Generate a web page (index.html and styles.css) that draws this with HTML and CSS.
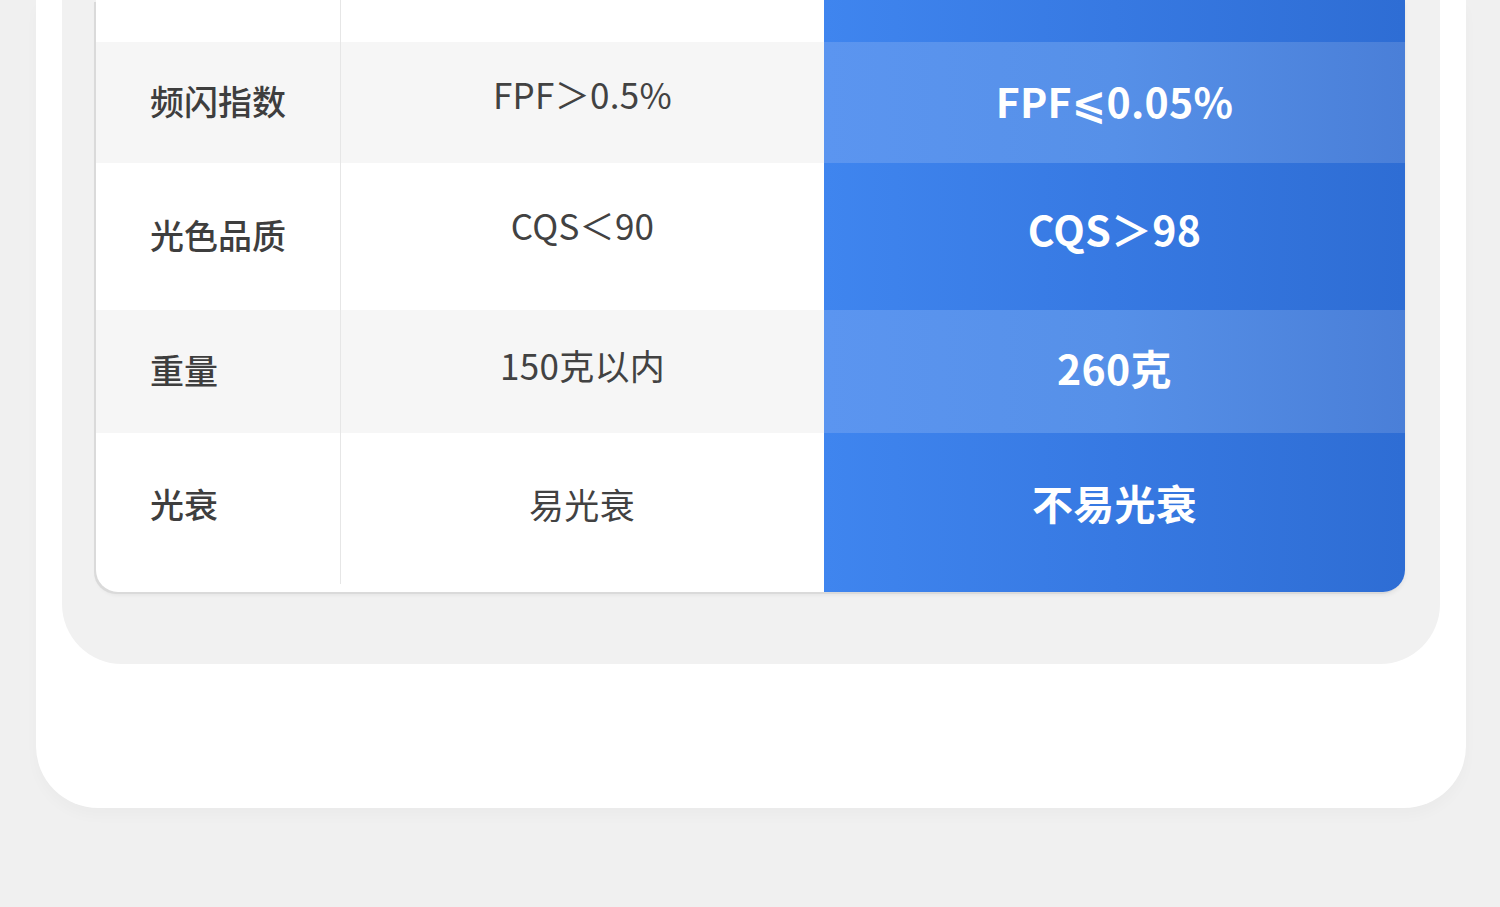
FILE: index.html
```html
<!DOCTYPE html>
<html lang="zh-CN">
<head>
<meta charset="utf-8">
<title>对比</title>
<link rel="stylesheet" href="styles.css">
</head>
<body>
<div class="page">
  <div class="outer">
    <div class="panel">
      <div class="card">
        <div class="cell c1 r0"></div>
        <div class="cell c2 r0"></div>
        <div class="cell c3 r0 dark"></div>

        <div class="cell c1 r1 gray">频闪指数</div>
        <div class="cell c2 r1 gray up7">FPF＞0.5%</div>
        <div class="cell c3 r1 light">FPF⩽0.05%</div>

        <div class="cell c1 r2">光色品质</div>
        <div class="cell c2 r2 up10">CQS＜90</div>
        <div class="cell c3 r2 dark up7">CQS＞98</div>

        <div class="cell c1 r3 gray">重量</div>
        <div class="cell c2 r3 gray up5">150克以内</div>
        <div class="cell c3 r3 light up3">260克</div>

        <div class="cell c1 r4 up7">光衰</div>
        <div class="cell c2 r4 up7">易光衰</div>
        <div class="cell c3 r4 dark up9">不易光衰</div>
      </div>
    </div>
  </div>
</div>
</body>
</html>
```
FILE: styles.css
```css
html, body {
  margin: 0;
  padding: 0;
}
body {
  background: #f0f0f0;
  width: 1500px;
  height: 907px;
  overflow: hidden;
  font-family: "Noto Sans CJK SC", "Noto Sans", "DejaVu Sans", sans-serif;
}
.page {
  padding-left: 36px;
}
.outer {
  width: 1430px;
  background: #ffffff;
  border-radius: 0 0 62px 62px;
  padding: 0 26px 144px 26px;
  box-sizing: border-box;
  box-shadow: 0 8px 14px rgba(0, 0, 0, 0.025);
}
.panel {
  width: 1378px;
  background: #f1f1f1;
  border-radius: 0 0 60px 60px;
  padding: 0 35px 72px 34px;
  box-sizing: border-box;
}
.card {
  width: 1309px;
  height: 592px;
  display: grid;
  grid-template-columns: 244px 484px 581px;
  grid-template-rows: 42px 121px 147px 123px 159px;
  background: #ffffff;
  border-radius: 0 0 22px 22px;
  overflow: hidden;
  box-shadow: -2px 2px 0 0 #dadada, 0 3px 4px rgba(0, 0, 0, 0.06);
}
.cell {
  display: flex;
  align-items: center;
  box-sizing: border-box;
  white-space: nowrap;
  padding-bottom: 5px;
}
.c1 {
  padding-left: 54px;
  font-size: 34px;
  font-weight: 500;
  color: #3e3e3e;
}
.c2 {
  justify-content: center;
  font-size: 35px;
  font-weight: 400;
  color: #424242;
  border-left: 1px solid #e6e6e6;
  letter-spacing: 0.3px;
}
.c2.r4 {
  border-left: none;
  background: linear-gradient(#e6e6e6, #e6e6e6) left top / 1px calc(100% - 8px) no-repeat;
}
.c3 {
  justify-content: center;
  font-size: 41px;
  font-weight: 700;
  color: #ffffff;
  letter-spacing: 0.3px;
}
.gray {
  background: #f6f6f6;
}
.dark {
  background: linear-gradient(90deg, #3f85ef 0%, #3779e2 50%, #2e6dd4 100%);
}
.light {
  background: linear-gradient(90deg, #5b95f0 0%, #5690e8 50%, #4a7fd8 100%);
}
.up3 { padding-bottom: 10px; }
.up5 { padding-bottom: 14px; }
.up7 { padding-bottom: 18px; }
.up9 { padding-bottom: 22px; }
.up10 { padding-bottom: 24px; }
```
